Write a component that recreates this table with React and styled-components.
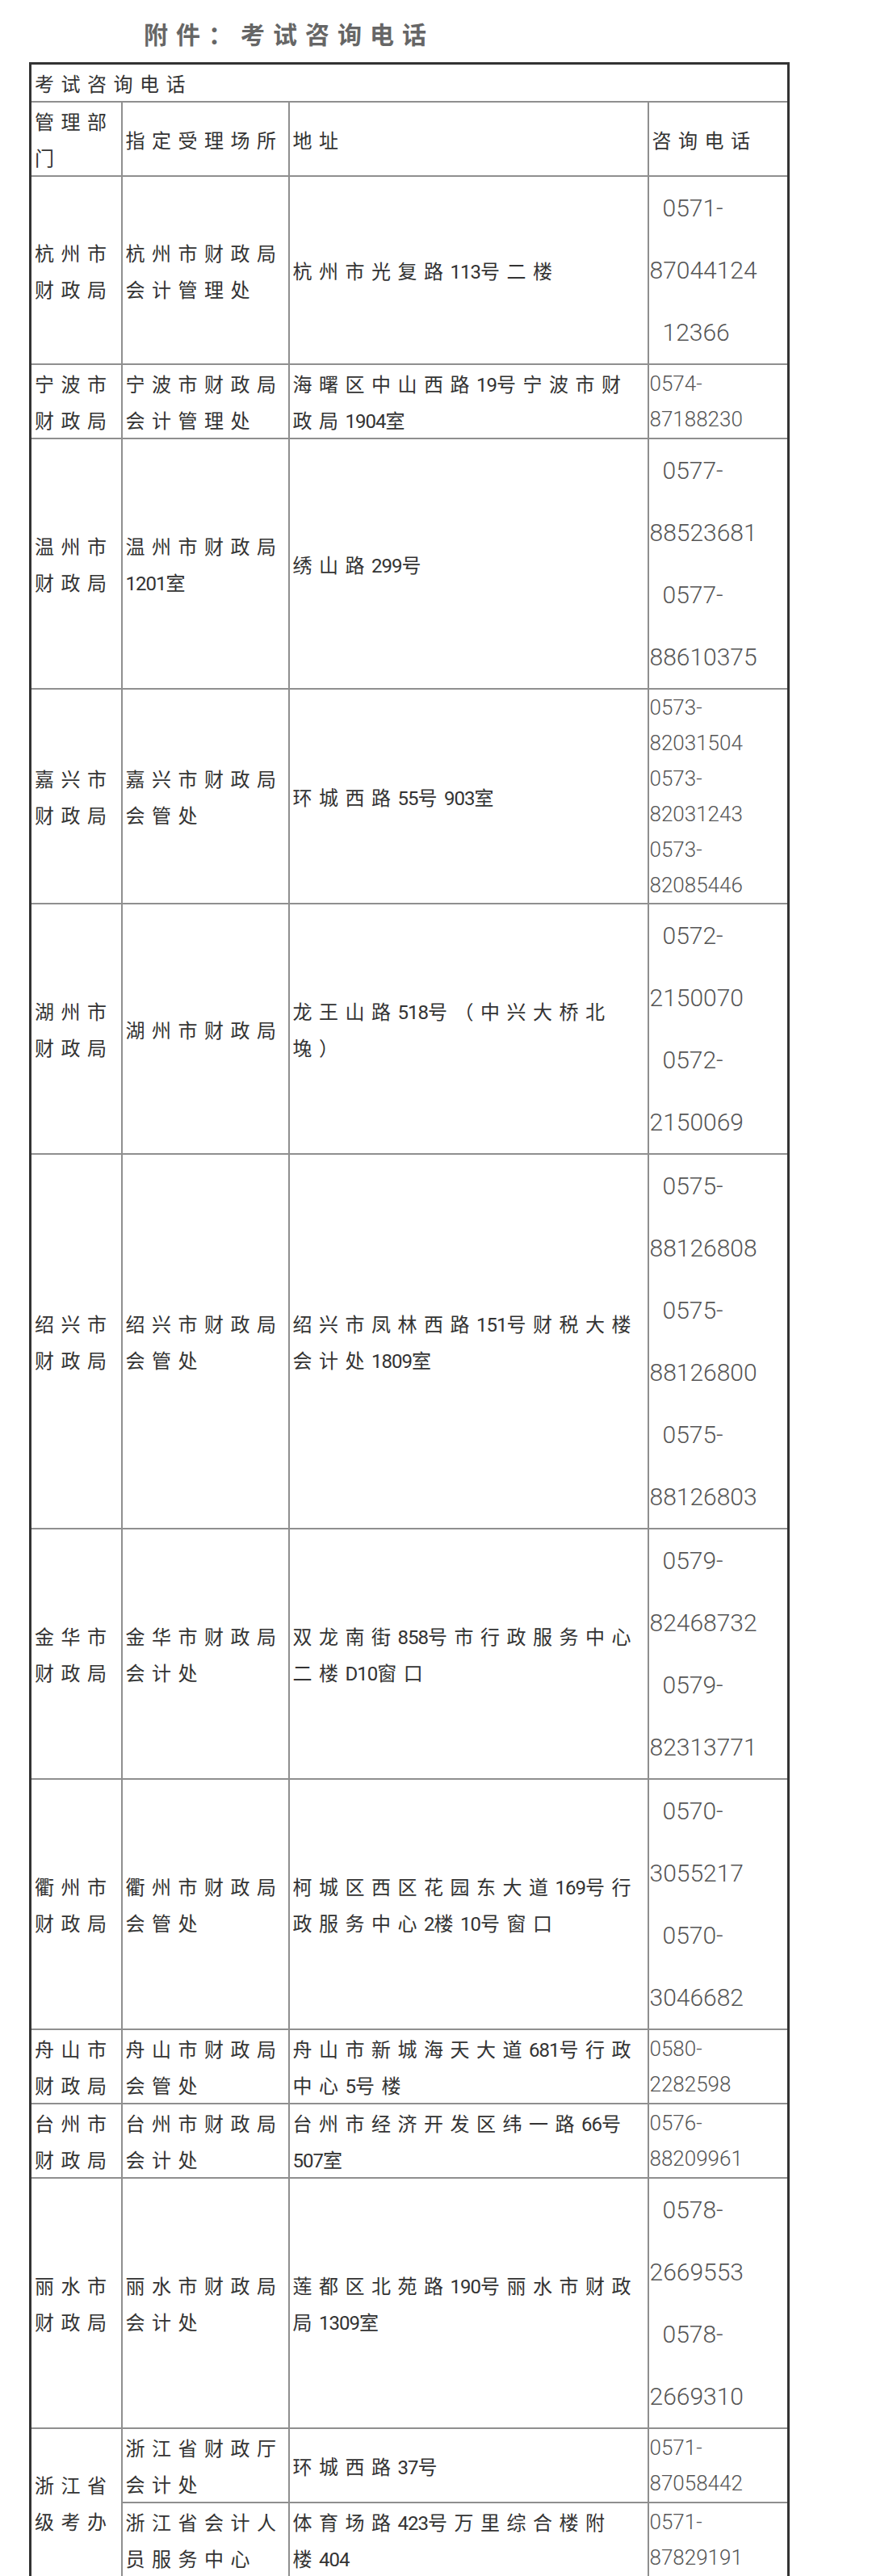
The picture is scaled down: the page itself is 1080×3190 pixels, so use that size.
import styled, { createGlobalStyle } from 'styled-components';

const GlobalStyle = createGlobalStyle`
  body {
    margin: 0;
    background: #fff;
    font-family: "Noto Sans CJK SC", "Noto Sans", sans-serif;
  }
`;

const Page = styled.div`
  width: 1080px;
  padding-top: 21px;
`;

const Heading = styled.h2`
  margin: 0 0 16px 178px;
  font-size: 30px;
  line-height: 40px;
  font-weight: 700;
  letter-spacing: 10px;
  color: #666;
`;

const Table = styled.table`
  margin-left: 36px;
  width: 939px;
  table-layout: fixed;
  border-collapse: collapse;
  border: 3px solid #333;
`;

const Cell = styled.td`
  border: 2px solid #8f8f8f;
  padding: 0 2px 0 ${({ $phone }) => ($phone ? '1px' : '4px')};
  vertical-align: middle;
  font-size: 24px;
  line-height: 45px;
  letter-spacing: 8.5px;
  color: #333;
  white-space: nowrap;
  overflow: visible;
`;

const Line = styled.div`
  height: 45px;
  line-height: 45px;
`;

const Num = styled.span`
  font-family: Roboto, "Liberation Sans", sans-serif;
  font-size: 24px;
  line-height: 1;
  letter-spacing: -1px;
`;

const PhoneLine = styled.div`
  font-family: Roboto, "Liberation Sans", sans-serif;
  font-weight: 300;
  font-size: ${({ $big }) => ($big ? '30px' : '26px')};
  height: ${({ $big }) => ($big ? '77px' : '44px')};
  line-height: ${({ $big }) => ($big ? '77px' : '44px')};
  padding-left: ${({ $indent }) => ($indent ? '16px' : '0')};
  letter-spacing: 0;
  color: #555;
`;

const rich = (text) =>
  text.split(/([0-9A-Za-z]+)/).map((part, i) =>
    /[0-9A-Za-z]/.test(part) ? <Num key={i}>{part}</Num> : part
  );

const Lines = ({ lines }) => lines.map((l, i) => <Line key={i}>{rich(l)}</Line>);

const Phones = ({ list, big }) =>
  list.map((p, i) => (
    <PhoneLine key={i} $big={big} $indent={big && (p.endsWith('-') || p.length === 5)}>
      {p}
    </PhoneLine>
  ));

const offices = [
  {
    dept: ['杭州市', '财政局'],
    place: ['杭州市财政局', '会计管理处'],
    addr: ['杭州市光复路113号二楼'],
    phones: ['0571-', '87044124', '12366'],
    big: true,
  },
  {
    dept: ['宁波市', '财政局'],
    place: ['宁波市财政局', '会计管理处'],
    addr: ['海曙区中山西路19号宁波市财', '政局1904室'],
    phones: ['0574-', '87188230'],
  },
  {
    dept: ['温州市', '财政局'],
    place: ['温州市财政局', '1201室'],
    addr: ['绣山路299号'],
    phones: ['0577-', '88523681', '0577-', '88610375'],
    big: true,
  },
  {
    dept: ['嘉兴市', '财政局'],
    place: ['嘉兴市财政局', '会管处'],
    addr: ['环城西路55号903室'],
    phones: ['0573-', '82031504', '0573-', '82031243', '0573-', '82085446'],
  },
  {
    dept: ['湖州市', '财政局'],
    place: ['湖州市财政局'],
    addr: ['龙王山路518号（中兴大桥北', '堍）'],
    phones: ['0572-', '2150070', '0572-', '2150069'],
    big: true,
  },
  {
    dept: ['绍兴市', '财政局'],
    place: ['绍兴市财政局', '会管处'],
    addr: ['绍兴市凤林西路151号财税大楼', '会计处1809室'],
    phones: ['0575-', '88126808', '0575-', '88126800', '0575-', '88126803'],
    big: true,
  },
  {
    dept: ['金华市', '财政局'],
    place: ['金华市财政局', '会计处'],
    addr: ['双龙南街858号市行政服务中心', '二楼D10窗口'],
    phones: ['0579-', '82468732', '0579-', '82313771'],
    big: true,
  },
  {
    dept: ['衢州市', '财政局'],
    place: ['衢州市财政局', '会管处'],
    addr: ['柯城区西区花园东大道169号行', '政服务中心2楼10号窗口'],
    phones: ['0570-', '3055217', '0570-', '3046682'],
    big: true,
  },
  {
    dept: ['舟山市', '财政局'],
    place: ['舟山市财政局', '会管处'],
    addr: ['舟山市新城海天大道681号行政', '中心5号楼'],
    phones: ['0580-', '2282598'],
  },
  {
    dept: ['台州市', '财政局'],
    place: ['台州市财政局', '会计处'],
    addr: ['台州市经济开发区纬一路66号', '507室'],
    phones: ['0576-', '88209961'],
  },
  {
    dept: ['丽水市', '财政局'],
    place: ['丽水市财政局', '会计处'],
    addr: ['莲都区北苑路190号丽水市财政', '局1309室'],
    phones: ['0578-', '2669553', '0578-', '2669310'],
    big: true,
  },
];

const provincial = [
  {
    place: ['浙江省财政厅', '会计处'],
    addr: ['环城西路37号'],
    phones: ['0571-', '87058442'],
  },
  {
    place: ['浙江省会计人', '员服务中心'],
    addr: ['体育场路423号万里综合楼附', '楼404'],
    phones: ['0571-', '87829191'],
  },
];

export default function App() {
  return (
    <Page>
      <GlobalStyle />
      <Heading>附件：考试咨询电话</Heading>
      <Table>
        <colgroup>
          <col style={{ width: 113 }} />
          <col style={{ width: 207 }} />
          <col style={{ width: 445 }} />
          <col style={{ width: 174 }} />
        </colgroup>
        <tbody>
          <tr>
            <Cell colSpan={4}>考试咨询电话</Cell>
          </tr>
          <tr>
            <Cell><Lines lines={['管理部', '门']} /></Cell>
            <Cell>指定受理场所</Cell>
            <Cell>地址</Cell>
            <Cell>咨询电话</Cell>
          </tr>
          {offices.map((o) => (
            <tr key={o.dept[0]}>
              <Cell><Lines lines={o.dept} /></Cell>
              <Cell><Lines lines={o.place} /></Cell>
              <Cell><Lines lines={o.addr} /></Cell>
              <Cell $phone><Phones list={o.phones} big={o.big} /></Cell>
            </tr>
          ))}
          {provincial.map((p, i) => (
            <tr key={p.place[0]}>
              {i === 0 && (
                <Cell rowSpan={2}><Lines lines={['浙江省', '级考办']} /></Cell>
              )}
              <Cell><Lines lines={p.place} /></Cell>
              <Cell><Lines lines={p.addr} /></Cell>
              <Cell $phone><Phones list={p.phones} /></Cell>
            </tr>
          ))}
        </tbody>
      </Table>
    </Page>
  );
}
